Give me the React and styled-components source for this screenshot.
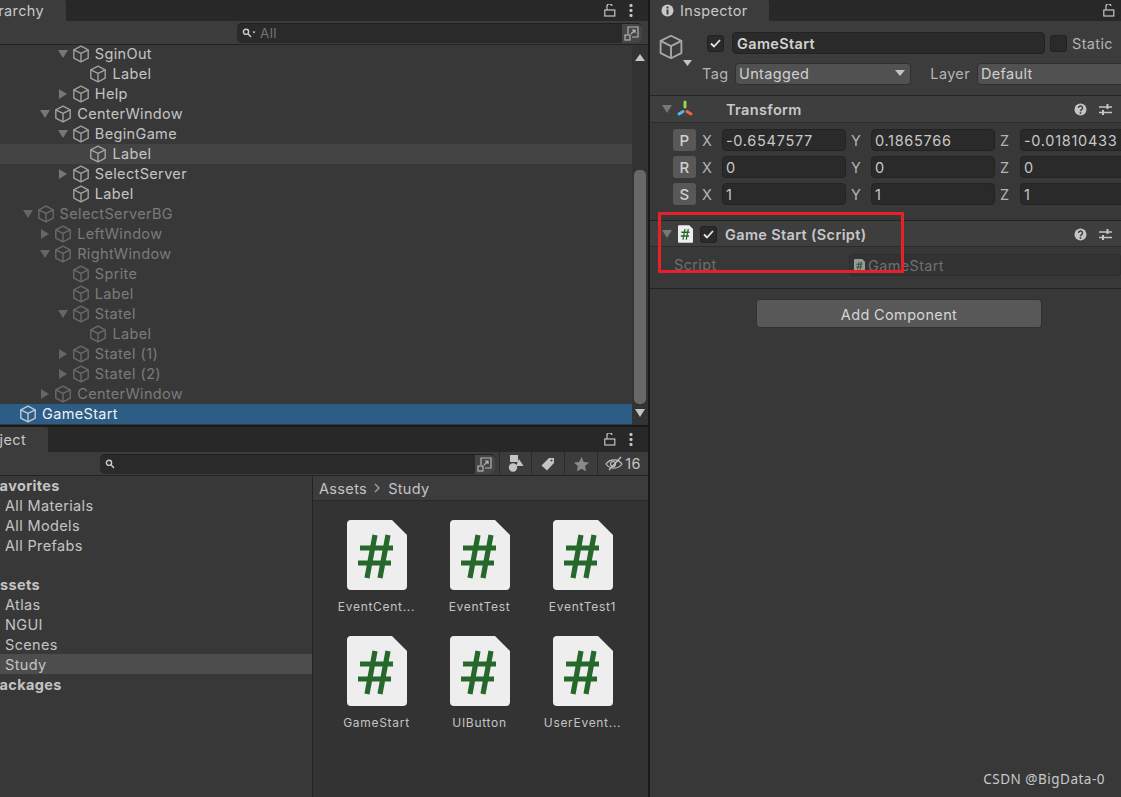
import React from 'react';
import styled, { createGlobalStyle } from 'styled-components';

const GlobalStyle = createGlobalStyle`
  html, body { margin: 0; padding: 0; background: #191919; }
  body { font-family: Inter, "Noto Sans", sans-serif; color: #c4c4c4; }
  * { box-sizing: border-box; }
`;

const Page = styled.div`
  position: relative;
  width: 1121px;
  height: 797px;
  overflow: hidden;
  display: grid;
  grid-template-columns: 650px 471px;
  font-size: 14.5px;
  letter-spacing: 0.35px;
`;

const LeftColumn = styled.div`
  display: flex;
  flex-direction: column;
  height: 797px;
  border-right: 2px solid #191919;
`;

const TabBar = styled.div`
  height: ${(p) => p.$h}px;
  flex: none;
  background: #282828;
  border-top: ${(p) => p.$gap || 0}px solid #191919;
  display: flex;
  align-items: center;
  justify-content: space-between;
`;

const Tab = styled.div`
  width: ${(p) => p.$w}px;
  height: 100%;
  background: #3c3c3c;
  display: flex;
  align-items: center;
  justify-content: ${(p) => (p.$clip ? 'flex-end' : 'flex-start')};
  gap: 6px;
  overflow: hidden;
  white-space: nowrap;
  padding: ${(p) => (p.$clip ? '0 22px 1px 0' : '0 0 1px 11px')};
  border-top-right-radius: 2px;
  color: #c8c8c8;
`;

const TabActions = styled.div`
  display: flex;
  align-items: center;
  gap: 13px;
  padding-right: ${(p) => p.$pr}px;
  color: #c4c4c4;
`;

const HierarchyPanel = styled.section`
  height: 425px;
  flex: none;
  display: flex;
  flex-direction: column;
`;

const Toolbar = styled.div`
  height: 24px;
  flex: none;
  background: #3c3c3c;
  border-bottom: 1px solid #232323;
  display: flex;
  align-items: center;
  justify-content: flex-end;
`;

const SearchBox = styled.div`
  height: 20px;
  border-radius: 5px;
  background: #2a2a2a;
  border-top: 1px solid #1f1f1f;
  display: flex;
  align-items: center;
  width: ${(p) => p.$w}px;
  margin-right: ${(p) => p.$mr}px;
  padding-left: 5px;
  gap: 4px;
  color: #737373;
  font-size: 13.5px;
  overflow: hidden;
`;

const SearchExpand = styled.div`
  margin-left: auto;
  width: 20px;
  height: 20px;
  background: #454545;
  display: flex;
  align-items: center;
  justify-content: center;
`;

const TreeArea = styled.div`
  flex: 1;
  min-height: 0;
  overflow: hidden;
  display: grid;
  grid-template-columns: 632px 16px;
  background: #383838;
`;

const TreeList = styled.div`
  display: flex;
  flex-direction: column;
  margin-top: -1px;
`;

const TreeRow = styled.div`
  height: 20px;
  flex: none;
  display: flex;
  align-items: center;
  padding-left: ${(p) => p.$depth * 17.6 + 1}px;
  background: ${(p) => (p.$selected ? '#2c5d87' : p.$hover ? '#444444' : 'transparent')};
  color: ${(p) => (p.$selected ? '#f0f0f0' : p.$dim ? '#7b7b7b' : '#c4c4c4')};
  white-space: nowrap;
`;

const ArrowSlot = styled.span`
  width: 18px;
  flex: none;
  display: flex;
  justify-content: center;
  color: ${(p) => (p.$dim ? '#666666' : '#777777')};
`;

const TreeLabel = styled.span`
  margin-left: 5px;
  padding-bottom: 2px;
`;

const Scrollbar = styled.div`
  display: flex;
  flex-direction: column;
  align-items: center;
  background: #333333;
  padding-top: 9px;
  color: #c4c4c4;
`;

const ScrollSpacer = styled.div`
  height: 109px;
`;

const ScrollThumb = styled.div`
  width: 12px;
  height: 234px;
  margin-bottom: 5px;
  border-radius: 5px;
  background: #686868;
`;

const ProjectPanel = styled.section`
  flex: 1;
  min-height: 0;
  display: flex;
  flex-direction: column;
`;

const FilterButton = styled.div`
  width: ${(p) => p.$w}px;
  height: 24px;
  flex: none;
  border-left: 1px solid #2a2a2a;
  display: flex;
  align-items: center;
  justify-content: center;
  gap: 2px;
  color: #c4c4c4;
`;

const ProjectBody = styled.div`
  flex: 1;
  min-height: 0;
  display: grid;
  grid-template-columns: 313px 1fr;
  background: #383838;
`;

const FolderTree = styled.div`
  border-right: 1px solid #232323;
  display: flex;
  flex-direction: column;
  overflow: hidden;
`;

const FolderList = styled.div`
  display: flex;
  flex-direction: column;
  margin-top: -1px;
`;

const FolderHeading = styled.div`
  height: 20px;
  flex: none;
  font-weight: 700;
  display: flex;
  align-items: center;
  margin-left: ${(p) => p.$ml}px;
  margin-top: ${(p) => p.$mt || 0}px;
  white-space: nowrap;
`;

const FolderRow = styled.div`
  height: 20px;
  flex: none;
  display: flex;
  align-items: center;
  padding-left: 5px;
  background: ${(p) => (p.$active ? '#4d4d4d' : 'transparent')};
`;

const AssetPane = styled.div`
  display: flex;
  flex-direction: column;
  background: #333333;
`;

const Breadcrumb = styled.div`
  height: 25px;
  flex: none;
  background: #3c3c3c;
  border-bottom: 1px solid #2a2a2a;
  display: flex;
  align-items: center;
  padding-left: 6px;
  gap: 7px;
`;

const AssetGrid = styled.div`
  display: grid;
  grid-template-columns: repeat(3, 103px);
  grid-auto-rows: 116px;
  padding: 19px 0 0 12px;
`;

const AssetCell = styled.div`
  display: flex;
  flex-direction: column;
  align-items: center;
  width: 103px;
  font-size: 12px;
  letter-spacing: 0.7px;
  color: #c4c4c4;
  gap: 9px;
`;

const Inspector = styled.section`
  display: flex;
  flex-direction: column;
  height: 797px;
  background: #383838;
`;

const ObjectHeader = styled.div`
  height: 75px;
  flex: none;
  background: #3c3c3c;
  border-bottom: 1px solid #232323;
  display: grid;
  grid-template-columns: 48px 1fr;
  padding: 11px 0 0 8px;
`;

const CubeSlot = styled.div`
  position: relative;
  padding-top: 2px;
  color: #a8a8a8;
`;

const CubeCaret = styled.span`
  position: absolute;
  display: flex;
  left: 25px;
  top: 28px;
  color: #c4c4c4;
`;

const HeaderRows = styled.div`
  display: flex;
  flex-direction: column;
  gap: 9px;
`;

const HeaderRow = styled.div`
  display: flex;
  align-items: center;
  height: 22px;
`;

const CheckBox = styled.span`
  width: 17px;
  height: 17px;
  flex: none;
  margin-left: ${(p) => p.$ml || 0}px;
  border-radius: 3px;
  background: #2a2a2a;
  border: 1px solid #222222;
  display: flex;
  align-items: center;
  justify-content: center;
  color: #e6e6e6;
`;

const NameField = styled.div`
  width: 313px;
  height: 22px;
  margin: 0 5px 0 8px;
  padding: 1px 0 0 4px;
  border-radius: 4px;
  background: #2a2a2a;
  border: 1px solid #232323;
  display: flex;
  align-items: center;
  font-weight: 600;
  color: #d2d2d2;
`;

const StaticLabel = styled.span`
  margin-left: 5px;
  color: #b4b4b4;
`;

const FieldLabel = styled.span`
  width: ${(p) => p.$w}px;
  flex: none;
  margin-left: ${(p) => p.$ml || 0}px;
  padding-bottom: 2px;
  color: #b4b4b4;
  text-align: right;
`;

const Dropdown = styled.div`
  width: ${(p) => p.$w}px;
  flex: none;
  height: 22px;
  margin-left: ${(p) => p.$ml}px;
  border-radius: 4px;
  background: #515151;
  border: 1px solid #303030;
  padding: 0 5px 2px 3px;
  display: flex;
  align-items: center;
  justify-content: space-between;
  color: #d0d0d0;
`;

const ComponentHeader = styled.div`
  height: 27px;
  flex: none;
  background: #3e3e3e;
  border-top: ${(p) => (p.$top ? '1px solid #232323' : 'none')};
  border-bottom: 1px solid #2c2c2c;
  display: flex;
  align-items: center;
  padding: ${(p) => (p.$top ? '1px' : '0')} 0 0 8px;
  font-weight: 600;
  color: #c8c8c8;
`;

const HeaderIcon = styled.span`
  width: 18px;
  display: flex;
  justify-content: center;
  flex: none;
`;

const ComponentTitle = styled.span`
  margin-left: ${(p) => p.$ml}px;
  flex: 1;
`;

const HeaderTools = styled.span`
  display: flex;
  align-items: center;
  gap: 12px;
  padding-right: 9px;
  color: #c4c4c4;
`;

const TransformGrid = styled.div`
  height: 97px;
  flex: none;
  padding: 6px 0 0 23px;
  display: flex;
  flex-direction: column;
  gap: 5px;
`;

const VectorRow = styled.div`
  display: flex;
  align-items: center;
  height: 22px;
`;

const AxisButton = styled.span`
  width: 23px;
  height: 22px;
  flex: none;
  border-radius: 3px;
  background: #585858;
  display: flex;
  align-items: center;
  justify-content: center;
  font-size: 15px;
  font-weight: 500;
  color: #d0d0d0;
  margin-right: 6px;
`;

const AxisLabel = styled.span`
  width: 20px;
  flex: none;
  color: #b4b4b4;
`;

const NumberField = styled.div`
  width: 124px;
  height: 22px;
  flex: none;
  margin-right: 5px;
  padding-left: 3px;
  border-radius: 4px;
  background: #2a2a2a;
  border: 1px solid #232323;
  display: flex;
  align-items: center;
  color: #c8c8c8;
  letter-spacing: 0.7px;
  white-space: nowrap;
  overflow: hidden;
`;

const ScriptRow = styled.div`
  height: 42px;
  flex: none;
  border-bottom: 1px solid #232323;
  padding: 7px 0 0 24px;
  display: flex;
  align-items: flex-start;
  color: #6f6f6f;
`;

const ScriptLabel = styled.span`
  width: 175px;
  padding-top: 2px;
  flex: none;
`;

const ScriptField = styled.div`
  flex: 1;
  height: 22px;
  border-radius: 3px;
  background: #333333;
  border: 1px solid #2e2e2e;
  display: flex;
  align-items: center;
  padding-left: 4px;
  gap: 3px;
`;

const FadedIcon = styled.span`
  display: flex;
  opacity: 0.55;
`;

const AddRow = styled.div`
  display: flex;
  padding: 10px 0 0 106px;
`;

const AddButton = styled.div`
  width: 286px;
  height: 29px;
  padding-top: 1px;
  border-radius: 4px;
  background: #585858;
  border: 1px solid #303030;
  display: flex;
  align-items: center;
  justify-content: center;
  color: #d6d6d6;
`;

const RedMark = styled.div`
  position: absolute;
  left: 658px;
  top: 212px;
  width: 246px;
  height: 61px;
  border: 3px solid #e8202a;
  border-radius: 1px;
  pointer-events: none;
`;

const Watermark = styled.div`
  position: absolute;
  right: 16px;
  bottom: 9px;
  font-family: "Noto Sans", sans-serif;
  font-size: 13.5px;
  letter-spacing: 0.5px;
  color: #c9c9c9;
`;

const Cube = ({ size = 18, sw = 1.4, fade = 0.75 }) => (
  <svg width={size} height={size} viewBox="0 0 18 18" fill="none" stroke="currentColor" strokeWidth={sw} strokeLinejoin="round" opacity={fade}>
    <path d="M9 1.2 16.2 4.8v8.4L9 16.8l-7.2-3.6V4.8z" />
    <path d="M1.8 4.8 9 8.4l7.2-3.6M9 8.4v8.4" />
  </svg>
);

const Down = () => (
  <svg width="10" height="8" viewBox="0 0 10 8" fill="currentColor"><path d="M0 0h10L5 8z" /></svg>
);

const Right = () => (
  <svg width="8" height="10" viewBox="0 0 8 10" fill="currentColor"><path d="M0 0v10l8-5z" /></svg>
);

const Lock = () => (
  <svg width="12" height="13" viewBox="0 0 12 13" fill="none" stroke="currentColor" strokeWidth="1.2">
    <rect x="0.8" y="6" width="10" height="6" />
    <path d="M3 6V3a2.5 2.5 0 0 1 5-1" />
  </svg>
);

const Kebab = () => (
  <svg width="4" height="13" viewBox="0 0 4 13" fill="currentColor">
    <rect x="0.5" width="3" height="3" rx="1" /><rect x="0.5" y="5" width="3" height="3" rx="1" /><rect x="0.5" y="10" width="3" height="3" rx="1" />
  </svg>
);

const Search = ({ caret }) => (
  <svg width="14" height="10" viewBox="0 0 14 10" fill="none" stroke="#d0d0d0" strokeWidth="1.4">
    <circle cx="4" cy="3.8" r="2.6" />
    <path d="M6 5.8 9 9" />
    {caret && <path d="M10.5 3.5h3l-1.5 2z" fill="#d0d0d0" stroke="none" />}
  </svg>
);

const Expand = () => (
  <svg width="16" height="16" viewBox="0 0 16 16" fill="none" stroke="#b4b4b4" strokeWidth="1.2">
    <path d="M4 9V2h10v10H8" />
    <rect x="1" y="10" width="5" height="5" />
    <path d="M7 9l4-4M8 5h3v3" />
  </svg>
);

const Check = () => (
  <svg width="11" height="9" viewBox="0 0 11 9" fill="none" stroke="currentColor" strokeWidth="1.8"><path d="M1 4.5 4 7.5 10 1" /></svg>
);

const Info = () => (
  <svg width="13" height="13" viewBox="0 0 13 13">
    <circle cx="6.5" cy="6.5" r="6" fill="#c8c8c8" />
    <rect x="5.5" y="5.5" width="2" height="5" fill="#3c3c3c" />
    <rect x="5.5" y="2.5" width="2" height="2" fill="#3c3c3c" />
  </svg>
);

const Help = () => (
  <svg width="13" height="13" viewBox="0 0 13 13">
    <circle cx="6.5" cy="6.5" r="6" fill="#c4c4c4" />
    <path d="M4.5 5a2 2 0 1 1 3 1.7c-.7.4-1 .7-1 1.5" fill="none" stroke="#3c3c3c" strokeWidth="1.4" />
    <rect x="5.7" y="9.2" width="1.6" height="1.6" fill="#3c3c3c" />
  </svg>
);

const Sliders = () => (
  <svg width="13" height="13" viewBox="0 0 13 13" fill="none" stroke="currentColor" strokeWidth="1.3">
    <path d="M0 4h13M0 9.5h13" />
    <path d="M8.5 1v5M4 7v5" strokeWidth="2" />
  </svg>
);

const Axes = () => (
  <svg width="18" height="18" viewBox="0 0 18 18" fill="none" strokeWidth="3" strokeLinecap="round">
    <path d="M9 2v5" stroke="#9bd64a" />
    <path d="M3 14l4-2.5" stroke="#55b8ee" />
    <path d="M15 14l-4-2.5" stroke="#ee6a3a" />
  </svg>
);

const ScriptDoc = ({ w = 60, h = 70 }) => (
  <svg width={w} height={h} viewBox="0 0 60 70">
    <path d="M4 0h41l15 15v51a4 4 0 0 1-4 4H4a4 4 0 0 1-4-4V4a4 4 0 0 1 4-4z" fill="#eeeeee" />
    <path d="M28 15 20 58M41 15 33 58M13 28h33M11 43h33" stroke="#26682c" strokeWidth="5.2" fill="none" />
  </svg>
);

const ShapesIcon = () => (
  <svg width="16" height="17" viewBox="0 0 16 17" fill="currentColor">
    <rect x="2" y="0" width="8" height="7" />
    <path d="M11 4l4.5 7H8z" />
    <circle cx="5" cy="12.5" r="4.2" />
  </svg>
);

const TagIcon = () => (
  <svg width="14" height="14" viewBox="0 0 14 14" fill="currentColor">
    <path d="M8 1h5v5l-7 7.5L.5 8.5z" />
    <circle cx="10.5" cy="3.5" r="1" fill="#3c3c3c" />
  </svg>
);

const StarIcon = () => (
  <svg width="15" height="14" viewBox="0 0 15 14" fill="#8a8a8a">
    <path d="M7.5 0 9.8 4.9l5.2.6-3.9 3.6 1 5.3-4.6-2.7-4.6 2.7 1-5.3L0 5.5l5.2-.6z" />
  </svg>
);

const EyeOff = () => (
  <svg width="18" height="15" viewBox="0 0 18 15" fill="none" stroke="currentColor" strokeWidth="1.2">
    <path d="M1 8c4-5.5 12-5.5 16 0-4 5.5-12 5.5-16 0z" />
    <circle cx="8" cy="8" r="2.5" />
    <path d="M16 1 4 14" />
  </svg>
);

const TabLock = () => (
  <TabActions $pr={15}><Lock /><Kebab /></TabActions>
);

const treeRows = [
  { name: 'SginOut', depth: 3, open: true },
  { name: 'Label', depth: 4 },
  { name: 'Help', depth: 3, closed: true },
  { name: 'CenterWindow', depth: 2, open: true },
  { name: 'BeginGame', depth: 3, open: true },
  { name: 'Label', depth: 4, hover: true },
  { name: 'SelectServer', depth: 3, closed: true },
  { name: 'Label', depth: 3 },
  { name: 'SelectServerBG', depth: 1, open: true, dim: true },
  { name: 'LeftWindow', depth: 2, closed: true, dim: true },
  { name: 'RightWindow', depth: 2, open: true, dim: true },
  { name: 'Sprite', depth: 3, dim: true },
  { name: 'Label', depth: 3, dim: true },
  { name: 'StateI', depth: 3, open: true, dim: true },
  { name: 'Label', depth: 4, dim: true },
  { name: 'StateI (1)', depth: 3, closed: true, dim: true },
  { name: 'StateI (2)', depth: 3, closed: true, dim: true },
  { name: 'CenterWindow', depth: 2, closed: true, dim: true },
  { name: 'GameStart', depth: 0, selected: true },
];

const assets = ['EventCent...', 'EventTest', 'EventTest1', 'GameStart', 'UIButton', 'UserEvent...'];

const vectors = [
  { key: 'P', x: '-0.6547577', y: '0.1865766', z: '-0.01810433' },
  { key: 'R', x: '0', y: '0', z: '0' },
  { key: 'S', x: '1', y: '1', z: '1' },
];

export default function App() {
  return (
    <Page>
      <GlobalStyle />
      <LeftColumn>
        <HierarchyPanel>
          <TabBar $h={21}>
            <Tab $w={66} $clip>Hierarchy</Tab>
            <TabLock />
          </TabBar>
          <Toolbar>
            <SearchBox $w={405} $mr={6}>
              <Search caret />
              All
              <SearchExpand><Expand /></SearchExpand>
            </SearchBox>
          </Toolbar>
          <TreeArea>
            <TreeList>
              {treeRows.map((row, i) => (
                <TreeRow key={i} $depth={row.depth} $dim={row.dim} $hover={row.hover} $selected={row.selected}>
                  <ArrowSlot $dim={row.dim}>
                    {row.open && <Down />}
                    {row.closed && <Right />}
                  </ArrowSlot>
                  <Cube />
                  <TreeLabel>{row.name}</TreeLabel>
                </TreeRow>
              ))}
            </TreeList>
            <Scrollbar>
              <svg width="10" height="7" viewBox="0 0 10 7" fill="currentColor"><path d="M0 7h10L5 0z" /></svg>
              <ScrollSpacer />
              <ScrollThumb />
              <Down />
            </Scrollbar>
          </TreeArea>
        </HierarchyPanel>
        <ProjectPanel>
          <TabBar $h={27} $gap={2}>
            <Tab $w={48} $clip>Project</Tab>
            <TabLock />
          </TabBar>
          <Toolbar>
            <SearchBox $w={395} $mr={4}>
              <Search />
              <SearchExpand><Expand /></SearchExpand>
            </SearchBox>
            <FilterButton $w={32}><ShapesIcon /></FilterButton>
            <FilterButton $w={33}><TagIcon /></FilterButton>
            <FilterButton $w={33}><StarIcon /></FilterButton>
            <FilterButton $w={51}><EyeOff />16</FilterButton>
          </Toolbar>
          <ProjectBody>
            <FolderTree>
              <FolderList>
                <FolderHeading $ml={-9}>Favorites</FolderHeading>
                <FolderRow>All Materials</FolderRow>
                <FolderRow>All Models</FolderRow>
                <FolderRow>All Prefabs</FolderRow>
                <FolderHeading $ml={-11} $mt={19}>Assets</FolderHeading>
                <FolderRow>Atlas</FolderRow>
                <FolderRow>NGUI</FolderRow>
                <FolderRow>Scenes</FolderRow>
                <FolderRow $active>Study</FolderRow>
                <FolderHeading $ml={-10}>Packages</FolderHeading>
              </FolderList>
            </FolderTree>
            <AssetPane>
              <Breadcrumb>
                Assets
                <svg width="7" height="10" viewBox="0 0 7 10" fill="none" stroke="#a0a0a0" strokeWidth="1.4"><path d="M1 1l4 4-4 4" /></svg>
                Study
              </Breadcrumb>
              <AssetGrid>
                {assets.map((name) => (
                  <AssetCell key={name}>
                    <ScriptDoc />
                    {name}
                  </AssetCell>
                ))}
              </AssetGrid>
            </AssetPane>
          </ProjectBody>
        </ProjectPanel>
      </LeftColumn>
      <Inspector>
        <TabBar $h={21}>
          <Tab $w={119}><Info />Inspector</Tab>
          <TabActions $pr={6}><Lock /></TabActions>
        </TabBar>
        <ObjectHeader>
          <CubeSlot>
            <Cube size={26} sw={1.3} fade={1} />
            <CubeCaret>
              <svg width="9" height="6" viewBox="0 0 9 6" fill="currentColor"><path d="M0 0h9L4.5 6z" /></svg>
            </CubeCaret>
          </CubeSlot>
          <HeaderRows>
            <HeaderRow>
              <CheckBox $ml={1}><Check /></CheckBox>
              <NameField>GameStart</NameField>
              <CheckBox />
              <StaticLabel>Static</StaticLabel>
            </HeaderRow>
            <HeaderRow>
              <FieldLabel $w={24} $ml={-4}>Tag</FieldLabel>
              <Dropdown $w={176} $ml={9}>
                Untagged
                <svg width="10" height="6" viewBox="0 0 10 6" fill="#c4c4c4"><path d="M0 0h10L5 6z" /></svg>
              </Dropdown>
              <FieldLabel $w={59}>Layer</FieldLabel>
              <Dropdown $w={170} $ml={7}>Default</Dropdown>
            </HeaderRow>
          </HeaderRows>
        </ObjectHeader>
        <ComponentHeader>
          <ArrowSlot><Down /></ArrowSlot>
          <HeaderIcon><Axes /></HeaderIcon>
          <ComponentTitle $ml={32}>Transform</ComponentTitle>
          <HeaderTools><Help /><Sliders /></HeaderTools>
        </ComponentHeader>
        <TransformGrid>
          {vectors.map((v) => (
            <VectorRow key={v.key}>
              <AxisButton>{v.key}</AxisButton>
              <AxisLabel>X</AxisLabel>
              <NumberField>{v.x}</NumberField>
              <AxisLabel>Y</AxisLabel>
              <NumberField>{v.y}</NumberField>
              <AxisLabel>Z</AxisLabel>
              <NumberField>{v.z}</NumberField>
            </VectorRow>
          ))}
        </TransformGrid>
        <ComponentHeader $top>
          <ArrowSlot><Down /></ArrowSlot>
          <HeaderIcon><ScriptDoc w={15} h={18} /></HeaderIcon>
          <CheckBox $ml={6}><Check /></CheckBox>
          <ComponentTitle $ml={8}>Game Start (Script)</ComponentTitle>
          <HeaderTools><Help /><Sliders /></HeaderTools>
        </ComponentHeader>
        <ScriptRow>
          <ScriptLabel>Script</ScriptLabel>
          <ScriptField>
            <FadedIcon><ScriptDoc w={11} h={13} /></FadedIcon>
            GameStart
          </ScriptField>
        </ScriptRow>
        <AddRow><AddButton>Add Component</AddButton></AddRow>
      </Inspector>
      <RedMark />
      <Watermark>CSDN @BigData-0</Watermark>
    </Page>
  );
}
